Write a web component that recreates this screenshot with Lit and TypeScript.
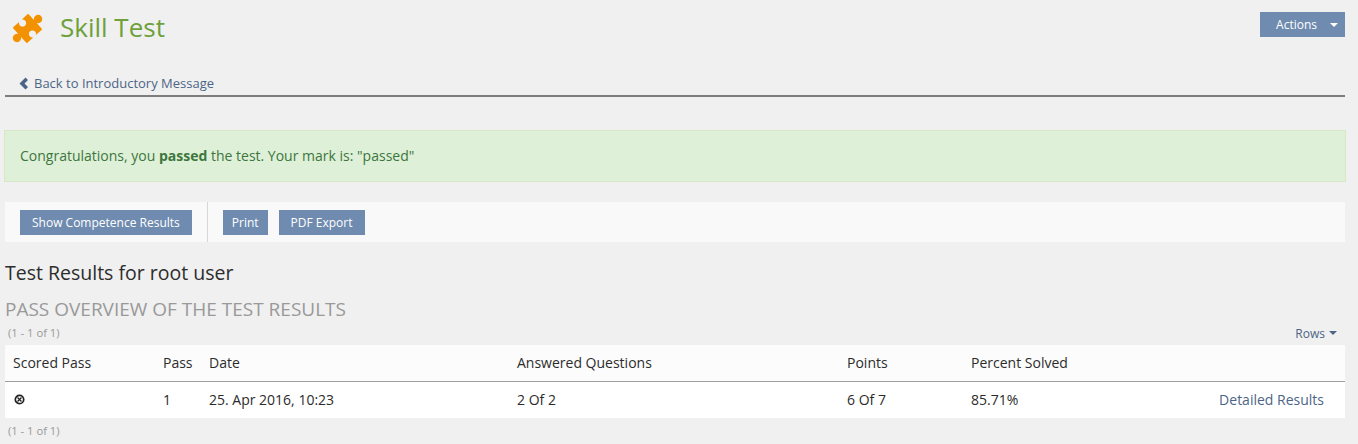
import { LitElement, html, css } from "lit";
import { customElement } from "lit/decorators.js";

@customElement("app-root")
export class AppRoot extends LitElement {
  static styles = css`
    :host { display: block; height: 444px; background: #f0f0f0; font-family: "Open Sans", sans-serif; font-size: 14px; color: #333; overflow: hidden; box-sizing: border-box; padding: 0 13px 0 5px; }
    .head { display: flex; justify-content: space-between; align-items: flex-start; height: 54px; }
    .title { display: flex; align-items: flex-start; gap: 15px; padding: 12px 0 0 6px; }
    .puzzle { width: 34px; height: 34px; display: block; }
    h1 { margin: 0; font-size: 26px; font-weight: 400; color: #6ea03c; line-height: 30px; }
    .btn { background: #6f8bb0; color: #fff; font-size: 12px; line-height: 25px; height: 25px; padding: 0 12px; display: flex; align-items: center; }
    .actions { margin-top: 12px; gap: 13px; padding: 0 7px 0 16px; }
    .caret { width: 0; height: 0; border: 4px solid transparent; border-top-color: currentColor; border-bottom: 0; }
    .tabs { height: 43px; box-sizing: border-box; border-bottom: 2px solid #7d7d7d; display: flex; align-items: flex-end; padding: 0 0 2px 14px; gap: 5px; font-size: 13px; color: #4c6586; line-height: 19px; }
    .chev { width: 10px; height: 13px; display: block; margin-bottom: 3px; }
    .msg { margin: 33px -1px 0 -1px; height: 52px; box-sizing: border-box; border: 1px solid #d6e9c6; background: #dff0d8; color: #3c763d; padding: 0 15px 2px; display: flex; align-items: center; gap: 4px; }
    .msg b { font-weight: 700; }
    .toolbar { margin-top: 20px; height: 40px; background: #f9f9f9; display: flex; align-items: center; padding-left: 15px; }
    .sep { width: 1px; height: 40px; background: #d6d6d6; margin: 0 15px; }
    .toolbar .btn + .btn { margin-left: 11px; }
    .toolbar .print { padding: 0 9px; }
    h2 { margin: 18px 0 0; font-size: 19.5px; font-weight: 400; color: #2c2c2c; line-height: 26px; }
    h3 { margin: 11px 0 0; font-size: 19px; font-weight: 400; color: #999; line-height: 24px; text-transform: uppercase; }
    .count { font-size: 11.2px; color: #999; line-height: 14px; padding-left: 3px; }
    .over { display: flex; justify-content: space-between; align-items: center; margin-top: 5px; height: 14px; }
    .rows { font-size: 12px; color: #4c6586; display: flex; align-items: center; gap: 4px; padding-right: 8px; }
    .row { display: grid; grid-template-columns: 150px 46px 308px 330px 124px 1fr auto; align-items: center; height: 36px; color: #2c2c2c; }
    .row > span { padding-left: 8px; }
    .row.th { margin-top: 5px; background: #fcfcfc; border-bottom: 1px solid #a0a0a0; padding-bottom: 1px; height: 35px; }
    .row.td { background: #fff; height: 36px; padding-bottom: 1px; box-sizing: border-box; }
    .row > .link { color: #4c6586; text-align: right; padding-right: 21px; }
    .x { width: 11px; height: 11px; display: block; margin-left: 1px; }
    .foot { margin-top: 6px; }
  `;

  render() {
    return html`
      <div class="head">
        <div class="title">
          <svg class="puzzle" viewBox="0 0 34 34">
            <path fill="#f39200" transform="translate(16.5 16.5) rotate(-42) translate(-10.5 -10.5)" d="M1 0H8.7A3.6 3.6 0 1 0 12.3 0H20A1 1 0 0 1 21 1V8.5A4.2 4.2 0 1 1 21 12.5V20A1 1 0 0 1 20 21H12.3A3.6 3.6 0 1 0 8.7 21H1A1 1 0 0 1 0 20V12.5A4.2 4.2 0 1 1 0 8.5V1A1 1 0 0 1 1 0Z"/>
          </svg>
          <h1>Skill Test</h1>
        </div>
        <div class="btn actions">Actions<span class="caret"></span></div>
      </div>
      <div class="tabs">
        <svg class="chev" viewBox="0 0 10 13"><path fill="#4c6586" d="M6.5 0.5 9 3 5.5 6.5 9 10 6.5 12.5 0.5 6.5Z"/></svg>
        <span>Back to Introductory Message</span>
      </div>
      <div class="msg"><span>Congratulations, you <b>passed</b> the test. Your mark is: "passed"</span></div>
      <div class="toolbar">
        <div class="btn">Show Competence Results</div>
        <div class="sep"></div>
        <div class="btn print">Print</div>
        <div class="btn">PDF Export</div>
      </div>
      <h2>Test Results for root user</h2>
      <h3>Pass Overview of the Test Results</h3>
      <div class="over">
        <span class="count">(1 - 1 of 1)</span>
        <span class="rows">Rows <span class="caret"></span></span>
      </div>
      <div class="row th">
        <span>Scored Pass</span><span>Pass</span><span>Date</span><span>Answered Questions</span><span>Points</span><span>Percent Solved</span>
      </div>
      <div class="row td">
        <span><svg class="x" viewBox="0 0 11 11"><circle cx="5.5" cy="5.5" r="4.2" fill="none" stroke="#222" stroke-width="1.7"/><path d="M3.5 3.5 7.5 7.5M7.5 3.5 3.5 7.5" stroke="#222" stroke-width="1.3"/></svg></span>
        <span>1</span><span>25. Apr 2016, 10:23</span><span>2 Of 2</span><span>6 Of 7</span><span>85.71%</span>
        <span class="link">Detailed Results</span>
      </div>
      <div class="foot count">(1 - 1 of 1)</div>
    `;
  }
}
